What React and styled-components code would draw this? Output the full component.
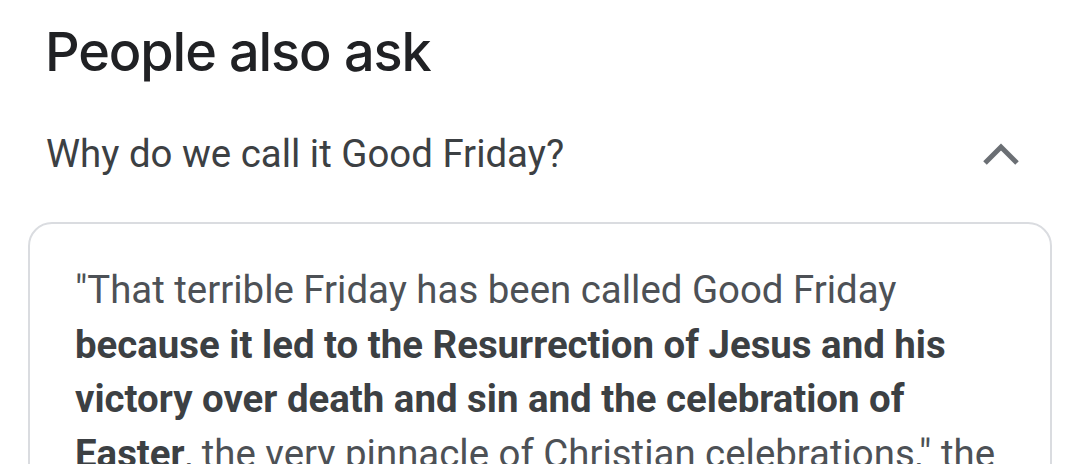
import React from "react";
import styled, { createGlobalStyle } from "styled-components";

const Global = createGlobalStyle`
  html, body { margin: 0; padding: 0; background: #fff; }
  body { font-family: Roboto, "Liberation Sans", sans-serif; overflow: hidden; }
`;

const Page = styled.div`
  width: 1079px;
  height: 464px;
  overflow: hidden;
  padding: 0 27px 0 28px;
  box-sizing: border-box;
`;

const Title = styled.h2`
  margin: 0;
  padding: 20px 0 0 17px;
  height: 82px;
  box-sizing: border-box;
  font-family: Inter, "Open Sans", sans-serif;
  font-weight: 500;
  font-size: 54px;
  line-height: 64px;
  color: #202124;
  letter-spacing: -1.1px;
`;

const QuestionRow = styled.div`
  display: flex;
  align-items: center;
  justify-content: space-between;
  box-sizing: border-box;
  height: 140px;
  padding: 3px 31px 0 18px;
`;

const Question = styled.span`
  font-size: 38.4px;
  color: #3c4043;
  font-weight: 400;
`;

const Chevron = styled.svg`
  width: 40px;
  height: 40px;
  display: block;
`;

const Card = styled.div`
  border: 2px solid #dadce0;
  border-radius: 24px;
  padding: 39px 40px 0 45px;
  height: 300px;
`;

const Answer = styled.p`
  margin: 0;
  font-size: 38.4px;
  line-height: 54.5px;
  color: #4d5156;
  b { font-weight: 700; color: #3c4043; }
`;

export default function App() {
  return (
    <>
      <Global />
      <Page>
        <Title>People also ask</Title>
        <QuestionRow>
          <Question>Why do we call it Good Friday?</Question>
          <Chevron viewBox="0 0 40 40">
            <path d="M4 29 L20 13 L36 29" fill="none" stroke="#6b6f74" strokeWidth="5" />
          </Chevron>
        </QuestionRow>
        <Card>
          <Answer>
            "That terrible Friday has been called Good Friday{" "}
            <b>because it led to the Resurrection of Jesus and his victory over death and sin and the celebration of Easter</b>, the very pinnacle of Christian celebrations," the
          </Answer>
        </Card>
      </Page>
    </>
  );
}
